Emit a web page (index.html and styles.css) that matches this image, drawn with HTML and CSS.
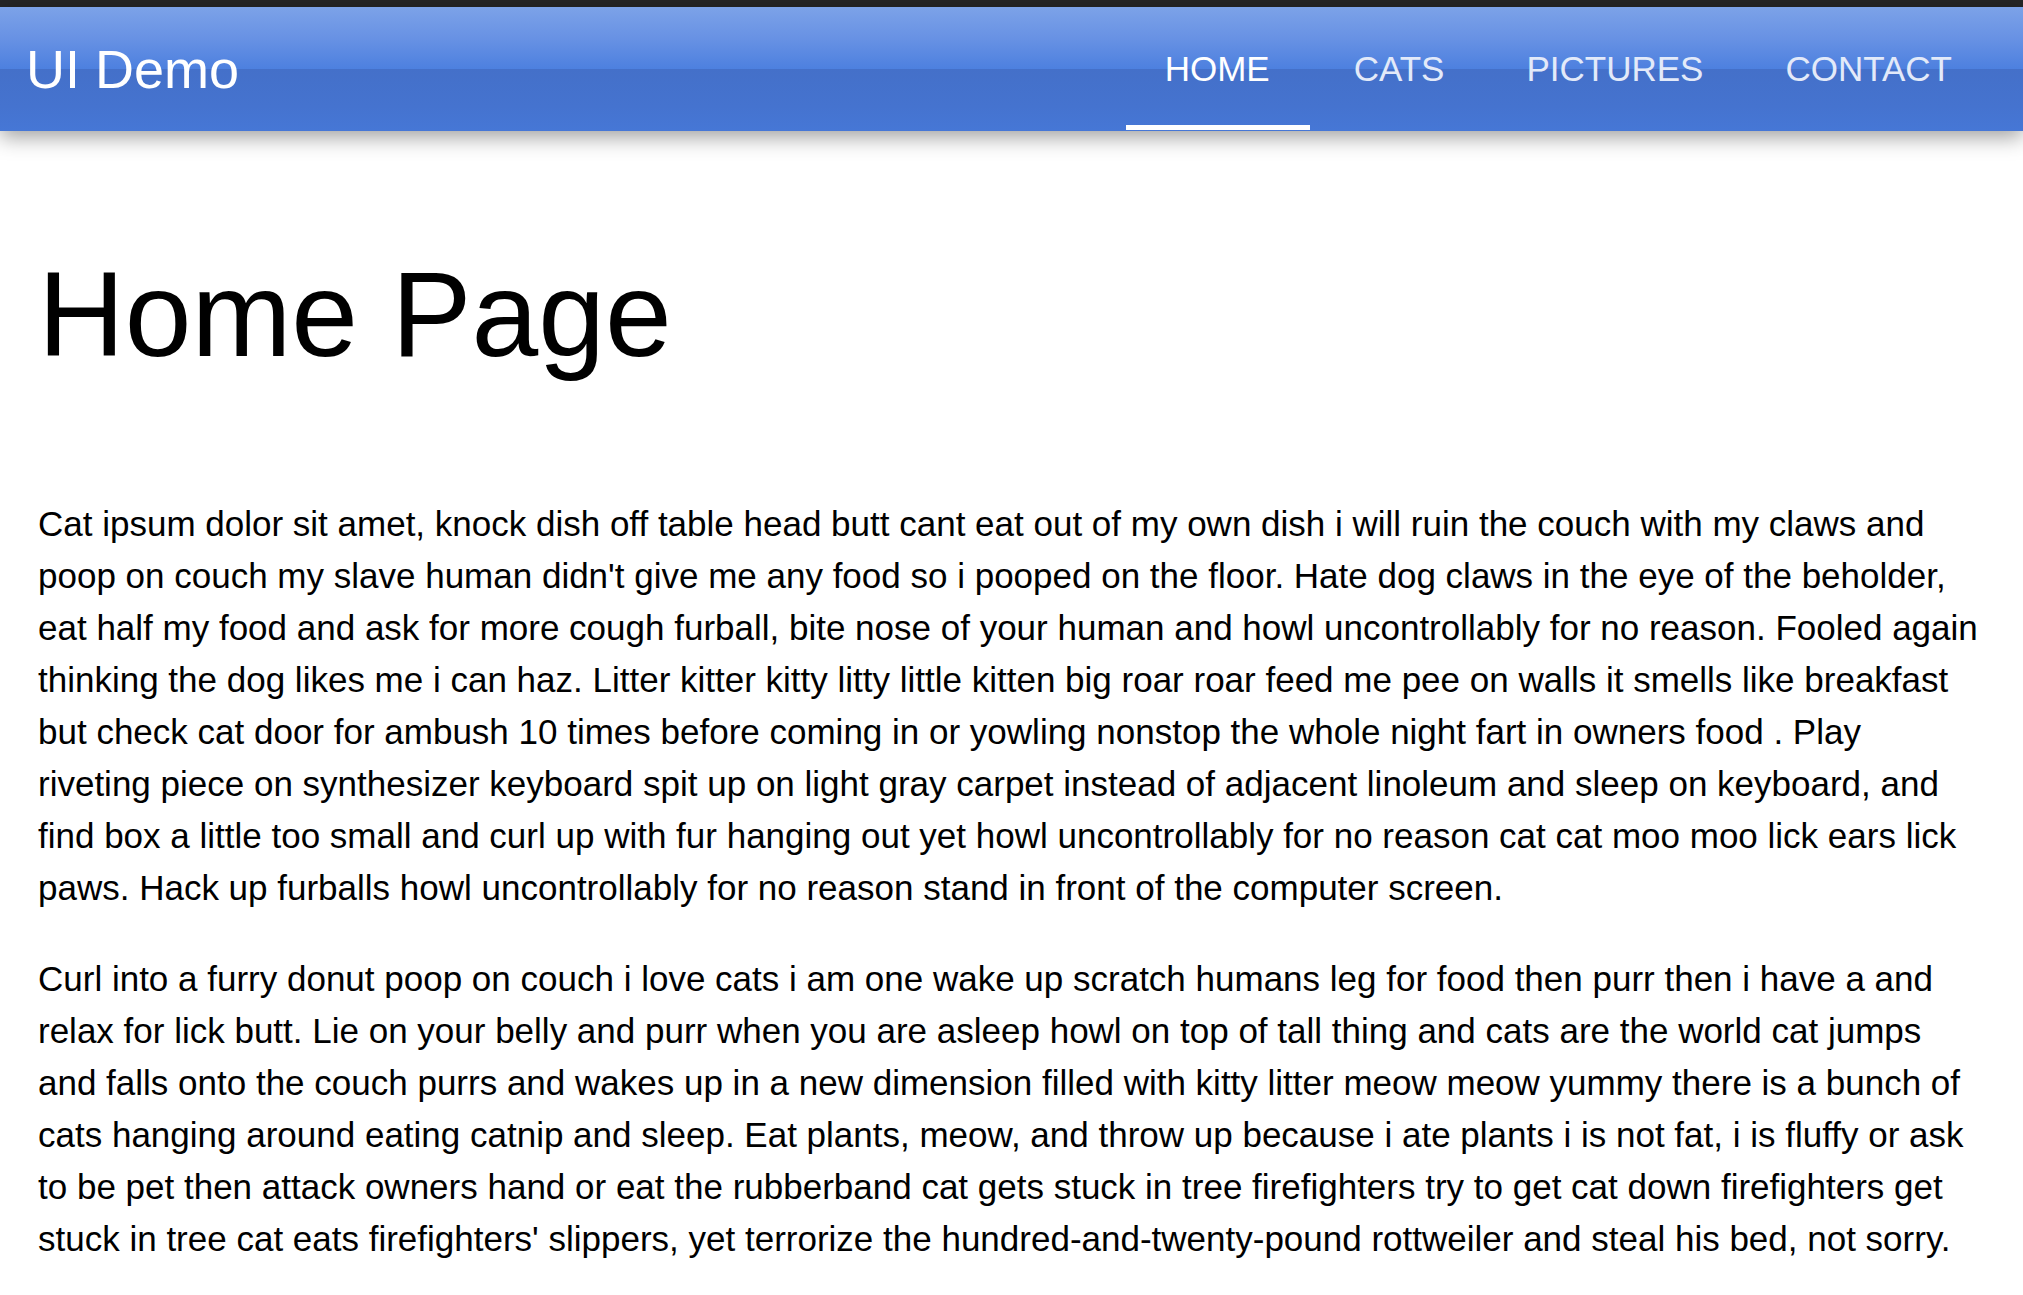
FILE: index.html
```html
<!DOCTYPE html>
<html lang="en">
<head>
<meta charset="utf-8">
<title>UI Demo</title>
<link rel="stylesheet" href="styles.css">
</head>
<body>
<div class="topbar"></div>
<header class="header">
  <div class="logo">UI Demo</div>
  <nav class="nav">
    <a class="nav-item active" href="#">HOME</a>
    <a class="nav-item" href="#">CATS</a>
    <a class="nav-item" href="#">PICTURES</a>
    <a class="nav-item" href="#">CONTACT</a>
  </nav>
</header>
<main class="main">
  <h1 class="title">Home Page</h1>
  <p class="text">Cat ipsum dolor sit amet, knock dish off table head butt cant eat out of my own dish i will ruin the couch with my claws and poop on couch my slave human didn't give me any food so i pooped on the floor. Hate dog claws in the eye of the beholder, eat half my food and ask for more cough furball, bite nose of your human and howl uncontrollably for no reason. Fooled again thinking the dog likes me i can haz. Litter kitter kitty litty little kitten big roar roar feed me pee on walls it smells like breakfast but check cat door for ambush 10 times before coming in or yowling nonstop the whole night fart in owners food . Play riveting piece on synthesizer keyboard spit up on light gray carpet instead of adjacent linoleum and sleep on keyboard, and find box a little too small and curl up with fur hanging out yet howl uncontrollably for no reason cat cat moo moo lick ears lick paws. Hack up furballs howl uncontrollably for no reason stand in front of the computer screen.</p>
  <p class="text">Curl into a furry donut poop on couch i love cats i am one wake up scratch humans leg for food then purr then i have a and relax for lick butt. Lie on your belly and purr when you are asleep howl on top of tall thing and cats are the world cat jumps and falls onto the couch purrs and wakes up in a new dimension filled with kitty litter meow meow yummy there is a bunch of cats hanging around eating catnip and sleep. Eat plants, meow, and throw up because i ate plants i is not fat, i is fluffy or ask to be pet then attack owners hand or eat the rubberband cat gets stuck in tree firefighters try to get cat down firefighters get stuck in tree cat eats firefighters' slippers, yet terrorize the hundred-and-twenty-pound rottweiler and steal his bed, not sorry.</p>
</main>
</body>
</html>
```

FILE: styles.css
```css
html, body {
  margin: 0;
  padding: 0;
  background: #ffffff;
  font-family: "Liberation Sans", Arial, sans-serif;
  color: #000000;
}

.topbar {
  height: 7px;
  background: #262626;
}

.header {
  position: relative;
  z-index: 1;
  height: 124px;
  display: flex;
  align-items: stretch;
  justify-content: space-between;
  background: linear-gradient(to bottom, #7ca2e8 0%, #6892e4 25%, #4d80df 50%, #4470c9 50%, #4573cf 80%, #4677d6 100%);
  box-shadow: 0 6px 20px rgba(0, 0, 0, 0.38);
}

.logo {
  display: flex;
  align-items: center;
  padding-left: 26px;
  font-size: 54px;
  color: #ffffff;
}

.nav {
  display: flex;
  align-items: stretch;
  gap: 0;
  margin-right: 30px;
}

.nav-item {
  position: relative;
  display: flex;
  align-items: center;
  padding: 0 41px;
  font-size: 35px;
  color: #e3eaf9;
  text-decoration: none;
}

.nav-item.active {
  color: #ffffff;
  padding: 0 43px 0 39px;
}

.nav-item.active::after {
  content: "";
  position: absolute;
  left: 0;
  right: 3px;
  bottom: 1px;
  height: 5px;
  background: #ffffff;
}

.main {
  padding: 0 43px 0 38px;
}

.title {
  margin: 114px 0 115px;
  font-size: 120px;
  font-weight: normal;
  line-height: 138px;
}

.text {
  margin: 0 0 39px;
  font-size: 35px;
  line-height: 52px;
}
```
